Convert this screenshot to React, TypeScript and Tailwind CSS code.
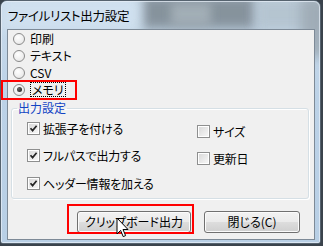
import React from "react";

const font = "[font-family:'Noto_Sans_CJK_JP','Noto_Sans',sans-serif] [font-feature-settings:'palt']";

function Radio({ label, checked, focus }: { label: string; checked?: boolean; focus?: boolean }) {
  return (
    <div className="h-[17px] flex items-center pl-[5px]">
      <div className="w-[12px] h-[12px] rounded-full border border-[#8a8a8a] bg-[radial-gradient(circle_at_40%_35%,#ffffff,#e2e2e2)] flex items-center justify-center">
        {checked && <div className="w-[5px] h-[5px] rounded-full bg-[radial-gradient(circle_at_35%_35%,#6a6a6a,#111)]" />}
      </div>
      <span
        className={
          "ml-[5px] text-[12px] leading-[13px] text-black " +
          (focus ? "border border-dotted border-black px-[1px] -ml-[0px]" : "")
        }
      >
        {label}
      </span>
    </div>
  );
}

function Check({ label, checked }: { label: string; checked?: boolean }) {
  return (
    <div className="h-[16px] flex items-center">
      <div className="w-[13px] h-[13px] border border-[#8e8f8f] bg-white p-[1px] shrink-0">
        <div className="w-full h-full bg-[linear-gradient(135deg,#dadada,#f6f6f6)] relative">
          {checked && (
            <svg viewBox="0 0 9 9" className="absolute inset-0 w-[9px] h-[9px]">
              <path d="M1.5 4.2 L3.6 6.6 L7.6 1.8" fill="none" stroke="#262626" strokeWidth="1.7" />
            </svg>
          )}
        </div>
      </div>
      <span className="ml-[3px] text-[12px] leading-[13px] text-black tracking-[-0.2px]">{label}</span>
    </div>
  );
}

function Button({ label, w }: { label: string; w: string }) {
  return (
    <div
      className={
        w +
        " h-[22px] rounded-[3px] border border-[#707070] bg-[linear-gradient(#f2f2f2_0%,#ebebeb_48%,#dddddd_52%,#cfcfcf_100%)] shadow-[inset_0_0_0_1px_#fbfbfb] flex items-center justify-center text-[12px] leading-none text-black"
      }
    >
      {label}
    </div>
  );
}

export default function App() {
  return (
    <div className={"relative w-[323px] h-[246px] bg-[#3a434c] overflow-hidden " + font}>
      <div className="relative w-[321px] h-[244px] rounded-t-[7px] rounded-b-[3px] border border-[#56636f] bg-[linear-gradient(180deg,#c9dbeb_0%,#bcd2e7_40%,#b8cfe5_100%)] flex flex-col overflow-hidden">
        {/* glass blotches */}
        <div className="absolute left-[140px] top-[-6px] w-[115px] h-[34px] bg-[#7f8b94] blur-[6px] opacity-90" />
        <div className="absolute left-[170px] top-[2px] w-[40px] h-[22px] bg-[#a9b5bd] blur-[5px] opacity-80" />
        <div className="absolute left-[255px] top-[-4px] w-[70px] h-[34px] bg-[#b3c2ce] blur-[6px] opacity-90" />
        <div className="absolute left-[300px] top-[-4px] w-[30px] h-[60px] bg-[#9aa6b0] blur-[6px] opacity-80" />
        <div className="absolute left-[0px] top-[-4px] w-[140px] h-[34px] bg-[#d2e2f0] blur-[6px] opacity-80" />
        <div className="absolute inset-0 rounded-t-[6px] border border-[#e8f0f8] opacity-70 pointer-events-none" />

        <div className="relative h-[28px] pl-[7px] pt-[3px] flex items-center text-[12.5px] leading-none text-black tracking-[-0.3px]">
          ファイルリスト出力設定
        </div>
        <div className="relative ml-[6px] mr-[5px] mb-[3px] flex-1 border border-[#7d8a97] bg-[#f0f0f0] flex flex-col">
          <div className="flex flex-col">
            <Radio label="印刷" />
            <Radio label="テキスト" />
            <Radio label="CSV" />
            <Radio label="メモリ" checked focus />
          </div>
          <fieldset className="mt-[3px] ml-[3px] mr-[5px] h-[98px] rounded-[3px] border border-[#d5dfe5] shadow-[inset_1px_1px_0_#ffffff,1px_1px_0_#ffffff] p-0">
            <legend className="ml-[5px] px-[1px] text-[12px] leading-[14px] text-[#1344c4]">出力設定</legend>
            <div className="flex pt-[5px]">
              <div className="w-[185px] pl-[15px] flex flex-col gap-[11.5px]">
                <Check label="拡張子を付ける" checked />
                <Check label="フルパスで出力する" checked />
                <Check label="ヘッダー情報を加える" checked />
              </div>
              <div className="flex flex-col gap-[11px] pt-[3px]">
                <Check label="サイズ" />
                <Check label="更新日" />
              </div>
            </div>
          </fieldset>
          <div className="mt-[12px] pl-[69px] flex gap-[13px]">
            <Button label="クリップボード出力" w="w-[114px]" />
            <Button label="閉じる(C)" w="w-[96px]" />
          </div>
        </div>
      </div>

      {/* red highlight boxes */}
      <div className="absolute left-[1px] top-[80px] w-[76px] h-[20px] border-2 border-[#ff0000]" />
      <div className="absolute left-[67px] top-[204px] w-[127px] h-[30px] border-2 border-[#ff0000]" />

      {/* mouse cursor */}
      <svg className="absolute left-[116px] top-[217px]" width="13" height="21" viewBox="0 0 13 21">
        <path d="M1 1 L1 17 L4.6 13.4 L7.2 19.6 L9.6 18.6 L7 12.5 L12 12.5 Z" fill="#ffffff" stroke="#000000" strokeWidth="1" strokeLinejoin="miter" />
      </svg>
    </div>
  );
}
